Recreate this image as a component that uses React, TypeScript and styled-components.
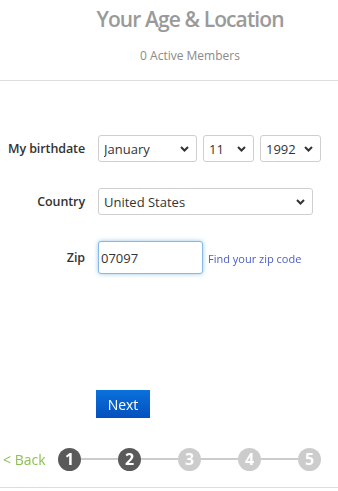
import React from "react";
import styled, { createGlobalStyle } from "styled-components";

const Global = createGlobalStyle`
  html, body { margin: 0; padding: 0; background: #fff; }
  body { font-family: "Open Sans", "Liberation Sans", sans-serif; color: #333; }
  * { box-sizing: border-box; }
`;

const Page = styled.div`
  width: 338px;
  height: 491px;
  display: flex;
  flex-direction: column;
  overflow: hidden;
`;

const Header = styled.header`
  display: flex;
  flex-direction: column;
  align-items: center;
  padding: 5px 0 0 42px;
  height: 81px;
  border-bottom: 1px solid #dddddd;
`;

const Title = styled.h1`
  margin: 0;
  font-size: 21px;
  font-weight: 600;
  letter-spacing: -0.9px;
  color: #9a9a9a;
  line-height: 28px;
`;

const Subtitle = styled.div`
  margin-top: 15px;
  font-size: 12px;
  color: #8a8a8a;
  line-height: 16px;
`;

const Form = styled.form`
  display: flex;
  flex-direction: column;
  padding-top: 54px;
`;

const Row = styled.div<{ $mt?: number }>`
  display: flex;
  align-items: center;
  margin-top: ${(p) => p.$mt ?? 0}px;
`;

const Label = styled.label`
  width: 85px;
  text-align: right;
  margin-right: 13px;
  font-size: 12.5px;
  font-weight: 600;
  letter-spacing: -0.1px;
  color: #333;
`;

const Fields = styled.div`
  display: flex;
  align-items: center;
  gap: 6px;
`;

const SelectWrap = styled.div<{ $w: number }>`
  position: relative;
  width: ${(p) => p.$w}px;
  height: 27px;
`;

const Select = styled.select`
  appearance: none;
  -webkit-appearance: none;
  width: 100%;
  height: 100%;
  border: 1px solid #cfcfcf;
  border-radius: 3px;
  background: #fff;
  padding: 0 0 0 5px;
  font-family: "Open Sans", "Liberation Sans", sans-serif;
  font-size: 13px;
  color: #333;
  outline: none;
`;

const Chevron = styled.svg`
  position: absolute;
  right: 8px;
  top: 11px;
  pointer-events: none;
`;

const ZipInput = styled.input`
  width: 105px;
  height: 33px;
  border: 1px solid #86b9e6;
  border-radius: 3px;
  box-shadow: 0 0 4px rgba(102, 175, 233, 0.7);
  padding: 0 0 0 2px;
  font-family: "Open Sans", "Liberation Sans", sans-serif;
  font-size: 13px;
  color: #333;
  outline: none;
`;

const ZipLink = styled.a`
  margin-left: 5px;
  font-size: 11px;
  color: #4b5ec4;
  text-decoration: none;
  padding-top: 2px;
`;

const NextButton = styled.button`
  margin: 116px 0 0 96px;
  width: 54px;
  height: 28px;
  border: none;
  background: linear-gradient(#0a71dc, #0450bd);
  color: #fff;
  font-family: "Open Sans", "Liberation Sans", sans-serif;
  font-size: 14px;
  padding: 0;
  align-self: flex-start;
`;

const Steps = styled.nav`
  display: flex;
  align-items: center;
  margin-top: 29px;
  height: 24px;
`;

const Back = styled.a`
  width: 58px;
  padding-left: 3px;
  font-size: 14px;
  color: #8cc152;
  text-decoration: none;
`;

const Track = styled.div`
  display: flex;
  align-items: center;
`;

const Connector = styled.div`
  width: 37px;
  height: 2px;
  background: #cccccc;
`;

const Step = styled.div<{ $done: boolean }>`
  width: 23px;
  height: 23px;
  border-radius: 50%;
  background: ${(p) => (p.$done ? "#5a5a5a" : "#cccccc")};
  color: #fff;
  font-size: 16px;
  font-weight: 700;
  display: flex;
  align-items: center;
  justify-content: center;
  line-height: 1;
`;

const BottomRule = styled.div`
  margin-top: 16px;
  border-top: 1px solid #dddddd;
`;

const ChevronIcon = () => (
  <Chevron width="9" height="6" viewBox="0 0 9 6">
    <path d="M1 1 L4.5 4.5 L8 1" fill="none" stroke="#333" strokeWidth="2" />
  </Chevron>
);

const Dropdown = ({ w, value, options }: { w: number; value: string; options: string[] }) => (
  <SelectWrap $w={w}>
    <Select defaultValue={value}>
      {options.map((o) => (
        <option key={o}>{o}</option>
      ))}
    </Select>
    <ChevronIcon />
  </SelectWrap>
);

export default function App() {
  const months = [
    "January", "February", "March", "April", "May", "June",
    "July", "August", "September", "October", "November", "December",
  ];
  const days = Array.from({ length: 31 }, (_, i) => String(i + 1));
  const years = Array.from({ length: 80 }, (_, i) => String(2010 - i));
  const steps = [1, 2, 3, 4, 5];
  return (
    <Page>
      <Global />
      <Header>
        <Title>Your Age &amp; Location</Title>
        <Subtitle>0 Active Members</Subtitle>
      </Header>
      <Form onSubmit={(e) => e.preventDefault()}>
        <Row>
          <Label>My birthdate</Label>
          <Fields>
            <Dropdown w={99} value="January" options={months} />
            <Dropdown w={51} value="11" options={days} />
            <Dropdown w={61} value="1992" options={years} />
          </Fields>
        </Row>
        <Row $mt={26}>
          <Label>Country</Label>
          <Dropdown w={215} value="United States" options={["United States", "Canada"]} />
        </Row>
        <Row $mt={26}>
          <Label>Zip</Label>
          <ZipInput defaultValue="07097" autoFocus />
          <ZipLink href="#">Find your zip code</ZipLink>
        </Row>
        <NextButton type="submit">Next</NextButton>
      </Form>
      <Steps>
        <Back href="#">&lt; Back</Back>
        <Track>
          {steps.map((n, i) => (
            <React.Fragment key={n}>
              {i > 0 && <Connector />}
              <Step $done={n <= 2}>{n}</Step>
            </React.Fragment>
          ))}
        </Track>
      </Steps>
      <BottomRule />
    </Page>
  );
}
